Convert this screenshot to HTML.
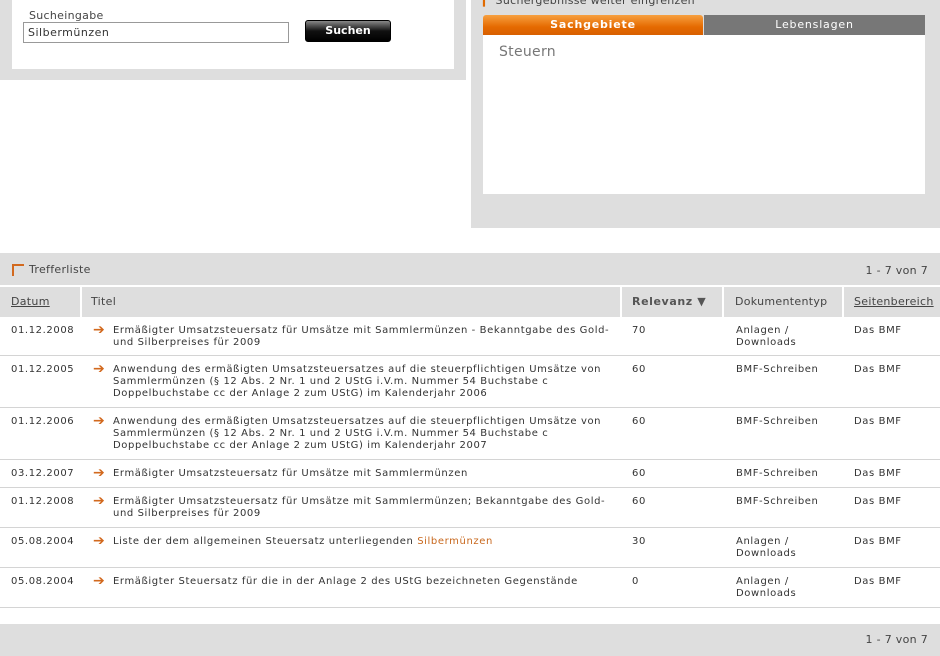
<!DOCTYPE html>
<html><head><meta charset="utf-8"><style>
*{margin:0;padding:0;box-sizing:border-box}
body{width:940px;height:656px;position:relative;background:#fff;font-family:"DejaVu Sans","Liberation Sans",sans-serif;font-size:10px;color:#333;overflow:hidden}
.a{position:absolute}
.row{position:absolute;left:0;width:940px;border-bottom:1px solid #d4d4d4}
.row div{position:absolute;top:8px;line-height:12px;letter-spacing:0.6px}
.row div.arr{color:#d2691e;font-weight:bold;font-size:14px;left:93px;top:7px;letter-spacing:0}
.h{font-size:11px;color:#444;letter-spacing:0.3px}
</style></head><body>
<div class="a" style="left:0;top:0;width:466px;height:80px;background:#dedede"></div>
<div class="a" style="left:12px;top:0;width:442px;height:69px;background:#fff"></div>
<div class="a h" style="left:29px;top:9px">Sucheingabe</div>
<div class="a" style="left:23px;top:22px;width:266px;height:21px;border:1px solid #999;font-size:11px;padding:3px 4px;color:#333;letter-spacing:0.5px">Silbermünzen</div>
<div class="a" style="left:305px;top:20px;width:86px;height:22px;border:1px solid #000;border-radius:3px;background:linear-gradient(#888,#111 50%,#000);color:#fff;font-weight:bold;font-size:11px;text-align:center;line-height:20px">Suchen</div>

<div class="a" style="left:471px;top:0;width:469px;height:228px;background:#dedede"></div>
<div class="a h" style="left:483px;top:-6px"><span style="color:#e06a00">▎</span> Suchergebnisse weiter eingrenzen</div>
<div class="a" style="left:483px;top:15px;width:220px;height:20px;background:linear-gradient(#f7a040,#e56a00 60%,#d85f00);color:#fff;font-weight:bold;font-size:11px;text-align:center;line-height:19px;border-radius:3px 3px 0 0;letter-spacing:0.8px">Sachgebiete</div>
<div class="a" style="left:704px;top:15px;width:221px;height:20px;background:#777;color:#fff;font-size:11px;text-align:center;line-height:19px;letter-spacing:0.8px">Lebenslagen</div>
<div class="a" style="left:483px;top:35px;width:442px;height:159px;background:#fff"></div>
<div class="a" style="left:499px;top:44px;font-size:14px;color:#777;letter-spacing:0.3px">Steuern</div>

<div class="a" style="left:0;top:253px;width:940px;height:32px;background:#dedede"></div>
<div class="a" style="left:12px;top:264px;width:12px;height:12px;border-left:2px solid #d2691e;border-top:2px solid #d2691e"></div>
<div class="a h" style="left:29px;top:263px">Trefferliste</div>
<div class="a h" style="right:12px;top:264px">1 - 7 von 7</div>

<div class="a" style="left:0;top:287px;width:940px;height:30px;background:#dedede"></div>
<div class="a" style="left:80px;top:287px;width:2px;height:30px;background:#fff"></div>
<div class="a" style="left:620px;top:287px;width:2px;height:30px;background:#fff"></div>
<div class="a" style="left:722px;top:287px;width:2px;height:30px;background:#fff"></div>
<div class="a" style="left:842px;top:287px;width:2px;height:30px;background:#fff"></div>
<div class="a h" style="left:11px;top:295px;text-decoration:underline">Datum</div>
<div class="a h" style="left:91px;top:295px">Titel</div>
<div class="a h" style="left:632px;top:295px;font-weight:bold;color:#555;letter-spacing:0.6px">Relevanz ▼</div>
<div class="a h" style="left:735px;top:295px">Dokumententyp</div>
<div class="a h" style="left:854px;top:295px;text-decoration:underline">Seitenbereich</div>

<div class="row" style="top:317px;height:39px"><div style="left:11px">01.12.2008</div><div class="arr">➔</div><div style="left:113px">Ermäßigter Umsatzsteuersatz für Umsätze mit Sammlermünzen - Bekanntgabe des Gold-<br>und Silberpreises für 2009</div><div style="left:632px">70</div><div style="left:736px">Anlagen /<br>Downloads</div><div style="left:854px">Das BMF</div></div>
<div class="row" style="top:356px;height:52px"><div style="left:11px">01.12.2005</div><div class="arr">➔</div><div style="left:113px">Anwendung des ermäßigten Umsatzsteuersatzes auf die steuerpflichtigen Umsätze von<br>Sammlermünzen (§ 12 Abs. 2 Nr. 1 und 2 UStG i.V.m. Nummer 54 Buchstabe c<br>Doppelbuchstabe cc der Anlage 2 zum UStG) im Kalenderjahr 2006</div><div style="left:632px">60</div><div style="left:736px">BMF-Schreiben</div><div style="left:854px">Das BMF</div></div>
<div class="row" style="top:408px;height:52px"><div style="left:11px">01.12.2006</div><div class="arr">➔</div><div style="left:113px">Anwendung des ermäßigten Umsatzsteuersatzes auf die steuerpflichtigen Umsätze von<br>Sammlermünzen (§ 12 Abs. 2 Nr. 1 und 2 UStG i.V.m. Nummer 54 Buchstabe c<br>Doppelbuchstabe cc der Anlage 2 zum UStG) im Kalenderjahr 2007</div><div style="left:632px">60</div><div style="left:736px">BMF-Schreiben</div><div style="left:854px">Das BMF</div></div>
<div class="row" style="top:460px;height:28px"><div style="left:11px">03.12.2007</div><div class="arr">➔</div><div style="left:113px">Ermäßigter Umsatzsteuersatz für Umsätze mit Sammlermünzen</div><div style="left:632px">60</div><div style="left:736px">BMF-Schreiben</div><div style="left:854px">Das BMF</div></div>
<div class="row" style="top:488px;height:40px"><div style="left:11px">01.12.2008</div><div class="arr">➔</div><div style="left:113px">Ermäßigter Umsatzsteuersatz für Umsätze mit Sammlermünzen; Bekanntgabe des Gold-<br>und Silberpreises für 2009</div><div style="left:632px">60</div><div style="left:736px">BMF-Schreiben</div><div style="left:854px">Das BMF</div></div>
<div class="row" style="top:528px;height:40px"><div style="left:11px">05.08.2004</div><div class="arr">➔</div><div style="left:113px">Liste der dem allgemeinen Steuersatz unterliegenden <span style="color:#c8681e">Silbermünzen</span></div><div style="left:632px">30</div><div style="left:736px">Anlagen /<br>Downloads</div><div style="left:854px">Das BMF</div></div>
<div class="row" style="top:568px;height:40px"><div style="left:11px">05.08.2004</div><div class="arr">➔</div><div style="left:113px">Ermäßigter Steuersatz für die in der Anlage 2 des UStG bezeichneten Gegenstände</div><div style="left:632px">0</div><div style="left:736px">Anlagen /<br>Downloads</div><div style="left:854px">Das BMF</div></div>

<div class="a" style="left:0;top:624px;width:940px;height:32px;background:#dedede"></div>
<div class="a h" style="right:12px;top:633px">1 - 7 von 7</div>
</body></html>
